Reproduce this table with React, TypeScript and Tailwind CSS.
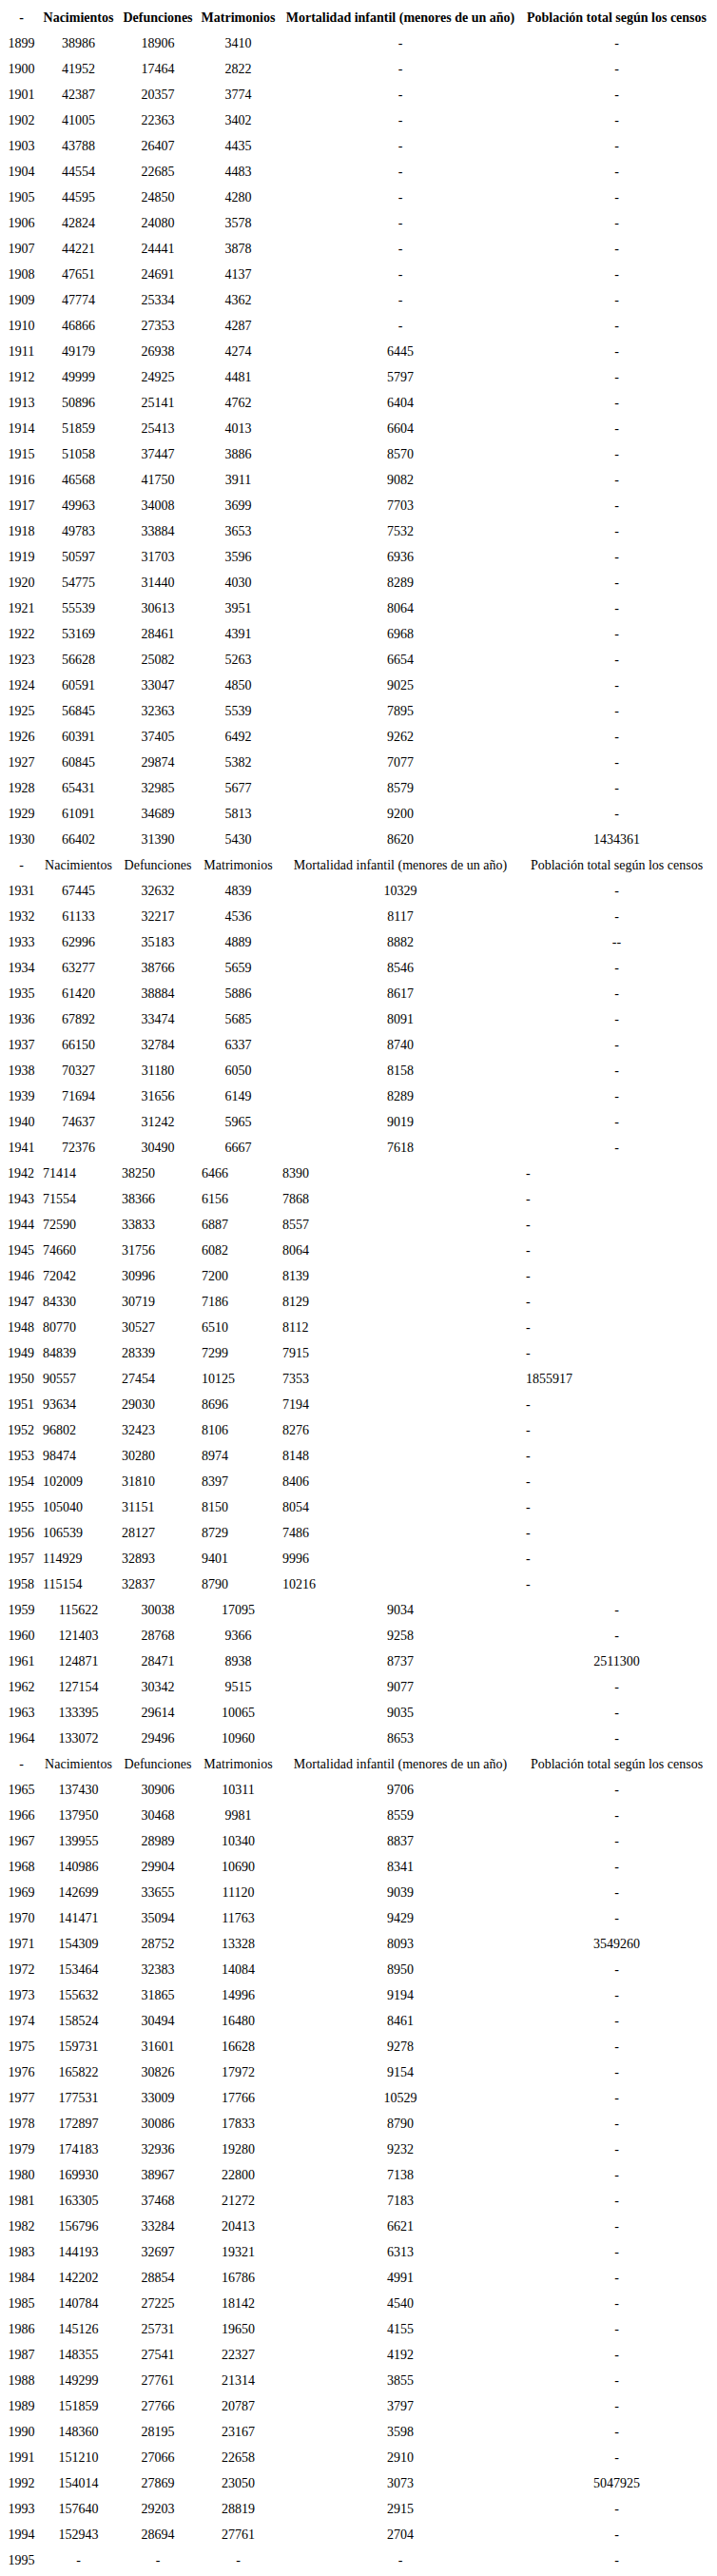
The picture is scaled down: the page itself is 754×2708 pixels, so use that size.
import React from "react";

type Row = { cells: string[]; kind: "head" | "head2" | "c" | "l" };

const s1 = `1899 38986 18906 3410 - -
1900 41952 17464 2822 - -
1901 42387 20357 3774 - -
1902 41005 22363 3402 - -
1903 43788 26407 4435 - -
1904 44554 22685 4483 - -
1905 44595 24850 4280 - -
1906 42824 24080 3578 - -
1907 44221 24441 3878 - -
1908 47651 24691 4137 - -
1909 47774 25334 4362 - -
1910 46866 27353 4287 - -
1911 49179 26938 4274 6445 -
1912 49999 24925 4481 5797 -
1913 50896 25141 4762 6404 -
1914 51859 25413 4013 6604 -
1915 51058 37447 3886 8570 -
1916 46568 41750 3911 9082 -
1917 49963 34008 3699 7703 -
1918 49783 33884 3653 7532 -
1919 50597 31703 3596 6936 -
1920 54775 31440 4030 8289 -
1921 55539 30613 3951 8064 -
1922 53169 28461 4391 6968 -
1923 56628 25082 5263 6654 -
1924 60591 33047 4850 9025 -
1925 56845 32363 5539 7895 -
1926 60391 37405 6492 9262 -
1927 60845 29874 5382 7077 -
1928 65431 32985 5677 8579 -
1929 61091 34689 5813 9200 -
1930 66402 31390 5430 8620 1434361`;

const s2 = `1931 67445 32632 4839 10329 -
1932 61133 32217 4536 8117 -
1933 62996 35183 4889 8882 --
1934 63277 38766 5659 8546 -
1935 61420 38884 5886 8617 -
1936 67892 33474 5685 8091 -
1937 66150 32784 6337 8740 -
1938 70327 31180 6050 8158 -
1939 71694 31656 6149 8289 -
1940 74637 31242 5965 9019 -
1941 72376 30490 6667 7618 -`;

const s3 = `1942 71414 38250 6466 8390 -
1943 71554 38366 6156 7868 -
1944 72590 33833 6887 8557 -
1945 74660 31756 6082 8064 -
1946 72042 30996 7200 8139 -
1947 84330 30719 7186 8129 -
1948 80770 30527 6510 8112 -
1949 84839 28339 7299 7915 -
1950 90557 27454 10125 7353 1855917
1951 93634 29030 8696 7194 -
1952 96802 32423 8106 8276 -
1953 98474 30280 8974 8148 -
1954 102009 31810 8397 8406 -
1955 105040 31151 8150 8054 -
1956 106539 28127 8729 7486 -
1957 114929 32893 9401 9996 -
1958 115154 32837 8790 10216 -`;

const s4 = `1959 115622 30038 17095 9034 -
1960 121403 28768 9366 9258 -
1961 124871 28471 8938 8737 2511300
1962 127154 30342 9515 9077 -
1963 133395 29614 10065 9035 -
1964 133072 29496 10960 8653 -`;

const s5 = `1965 137430 30906 10311 9706 -
1966 137950 30468 9981 8559 -
1967 139955 28989 10340 8837 -
1968 140986 29904 10690 8341 -
1969 142699 33655 11120 9039 -
1970 141471 35094 11763 9429 -
1971 154309 28752 13328 8093 3549260
1972 153464 32383 14084 8950 -
1973 155632 31865 14996 9194 -
1974 158524 30494 16480 8461 -
1975 159731 31601 16628 9278 -
1976 165822 30826 17972 9154 -
1977 177531 33009 17766 10529 -
1978 172897 30086 17833 8790 -
1979 174183 32936 19280 9232 -
1980 169930 38967 22800 7138 -
1981 163305 37468 21272 7183 -
1982 156796 33284 20413 6621 -
1983 144193 32697 19321 6313 -
1984 142202 28854 16786 4991 -
1985 140784 27225 18142 4540 -
1986 145126 25731 19650 4155 -
1987 148355 27541 22327 4192 -
1988 149299 27761 21314 3855 -
1989 151859 27766 20787 3797 -
1990 148360 28195 23167 3598 -
1991 151210 27066 22658 2910 -
1992 154014 27869 23050 3073 5047925
1993 157640 29203 28819 2915 -
1994 152943 28694 27761 2704 -
1995 - - - - -`;

const header = [
  "-",
  "Nacimientos",
  "Defunciones",
  "Matrimonios",
  "Mortalidad infantil (menores de un año)",
  "Población total según los censos",
];

const parse = (s: string, kind: "c" | "l"): Row[] =>
  s.split("\n").map((line) => ({ cells: line.trim().split(/\s+/), kind }));

const rows: Row[] = [
  { cells: header, kind: "head" },
  ...parse(s1, "c"),
  { cells: header, kind: "head2" },
  ...parse(s2, "c"),
  ...parse(s3, "l"),
  ...parse(s4, "c"),
  { cells: header, kind: "head2" },
  ...parse(s5, "c"),
];

export default function App() {
  return (
    <div className="w-[754px] bg-white pt-[5px] font-['Liberation_Serif',serif] text-[14px] text-black">
      <table className="ml-[4px] w-[744px] table-fixed border-collapse">
        <colgroup>
          <col className="w-[37px]" />
          <col className="w-[83px]" />
          <col className="w-[84px]" />
          <col className="w-[85px]" />
          <col className="w-[256px]" />
          <col className="w-[199px]" />
        </colgroup>
        <tbody>
          {rows.map((r, i) => (
            <tr key={i} className="h-[27px]">
              {r.cells.map((c, j) =>
                r.kind === "head" ? (
                  <th key={j} className="p-0 text-center align-middle font-bold whitespace-nowrap">
                    {c}
                  </th>
                ) : (
                  <td
                    key={j}
                    className={
                      r.kind === "l"
                        ? "px-[4px] py-0 text-left align-middle whitespace-nowrap"
                        : "p-0 text-center align-middle whitespace-nowrap"
                    }
                  >
                    {c}
                  </td>
                )
              )}
            </tr>
          ))}
        </tbody>
      </table>
    </div>
  );
}
